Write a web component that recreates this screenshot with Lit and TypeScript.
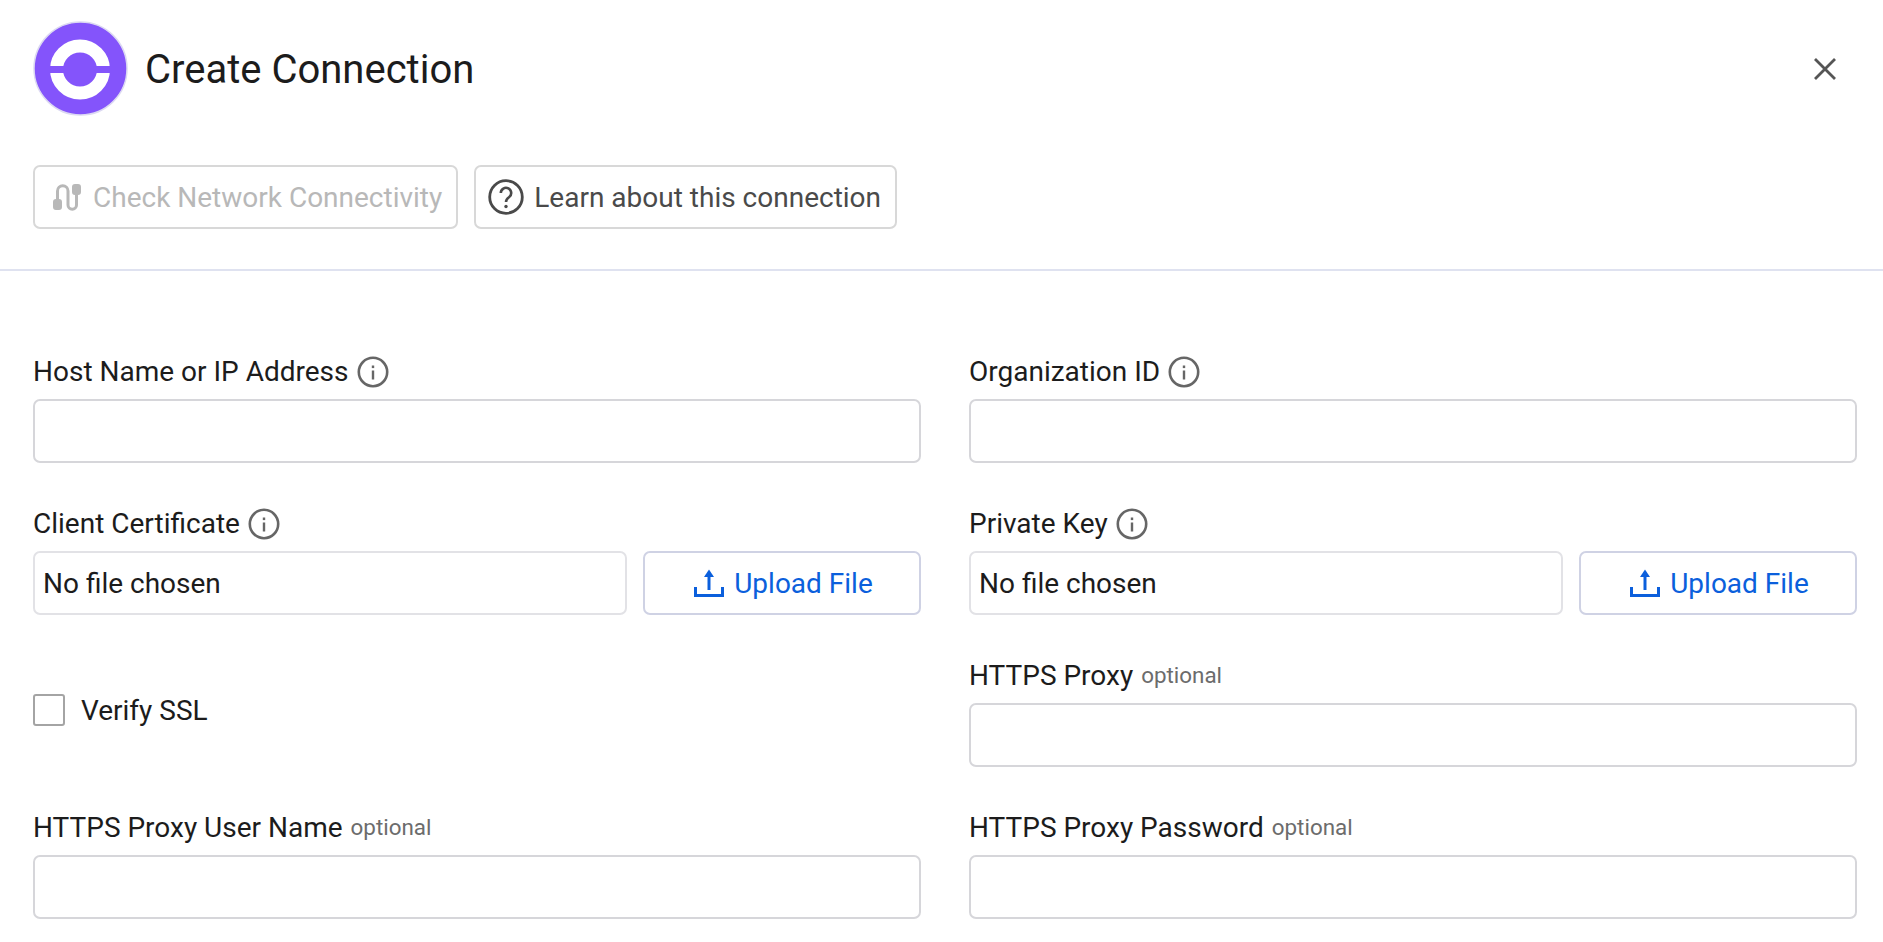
import { LitElement, html, css } from "lit";
import { customElement } from "lit/decorators.js";

const info = html`<svg class="info" viewBox="0 0 32 32" fill="none"><circle cx="16" cy="16" r="14.200" stroke="#666" stroke-width="2.600"/><rect x="14.800" y="14.500" width="2.400" height="9" fill="#666"/><rect x="14.800" y="9.500" width="2.400" height="2.600" fill="#666"/></svg>`;
const upload = html`<svg class="up" viewBox="0 0 30 28" fill="none"><path d="M1.500 18v8.500h27V18" stroke="#0b5fdc" stroke-width="3"/><path d="M15 21V5" stroke="#0b5fdc" stroke-width="3"/><path d="M10 8L15 0.500l5 7.500z" fill="#0b5fdc"/></svg>`;

@customElement("app-root")
export class AppRoot extends LitElement {
  static styles = css`
    :host { display: block; height: 942px; overflow: hidden; background: #fff; font-family: Roboto, "Liberation Sans", sans-serif; color: #1c1c1c; }
    .head { display: flex; align-items: center; height: 96px; padding: 21px 40px 0 33px; }
    .logo { width: 96px; height: 96px; flex: none; }
    h1 { flex: 1; margin: 2px 0 0 16px; font-size: 40px; font-weight: 400; line-height: 96px; }
    .close { width: 36px; height: 36px; }
    .actions { display: flex; gap: 16px; padding: 48px 33px 40px; border-bottom: 2px solid #dfe2f0; }
    .btn { display: flex; align-items: center; box-sizing: border-box; height: 64px; padding: 0 14px 0 12px; border: 2px solid #d8d8d8; border-radius: 7px; font-size: 28px; color: #4a4a4a; white-space: nowrap; gap: 10px; }
    .btn.off { color: #b8b8b8; padding: 0 14px 0 14px; gap: 8px; }
    .btn svg { width: 36px; height: 36px; flex: none; }
    .grid { display: grid; grid-template-columns: 888px 888px; column-gap: 48px; grid-auto-rows: 152px; padding: 77px 0 0 33px; }
    .field { display: flex; flex-direction: column; justify-content: flex-end; height: 115px; }
    .lab { display: flex; align-items: center; gap: 8px; height: 34px; margin-bottom: 10px; font-size: 28px; line-height: 34px; white-space: nowrap; }
    .opt { font-size: 22.400px; color: #6c6c6c; margin-top: -3px; }
    .info { width: 32px; height: 32px; flex: none; }
    .input { box-sizing: border-box; height: 64px; border: 2px solid #d6d6da; border-radius: 7px; }
    .file { display: flex; gap: 16px; }
    .name { flex: 1; box-sizing: border-box; height: 64px; border: 2px solid #e2e2e6; border-radius: 7px; padding: 0 8px; font-size: 28px; line-height: 62px; }
    .upl { width: 278px; box-sizing: border-box; height: 64px; flex: none; display: flex; align-items: center; justify-content: center; gap: 10px; padding-left: 3px; border: 2px solid #cfd2e4; border-radius: 7px; color: #0b5fdc; font-size: 28px; }
    .up { width: 30px; height: 28px; flex: none; }
    .check { display: flex; align-items: center; gap: 16px; font-size: 28px; height: 115px; box-sizing: border-box; }
    .check span:last-child { padding-top: 2px; }
    .box { box-sizing: border-box; width: 32px; height: 32px; border: 2px solid #a4a4a4; border-radius: 3px; flex: none; }
  `;

  private field(label: string, opt = "", hasInfo = false) {
    return html`<div class="field"><div class="lab"><span>${label}</span>${opt ? html`<span class="opt">${opt}</span>` : ""}${hasInfo ? info : ""}</div><div class="input"></div></div>`;
  }
  private file(label: string) {
    return html`<div class="field"><div class="lab"><span>${label}</span>${info}</div><div class="file"><div class="name">No file chosen</div><div class="upl">${upload}<span>Upload File</span></div></div></div>`;
  }

  render() {
    return html`
      <div class="head">
        <svg class="logo" viewBox="0 0 96 96">
          <circle cx="47.500" cy="47.500" r="46.500" fill="#8454fb" stroke="#dcd9f2" stroke-width="1.500"/>
          <circle cx="47" cy="48.500" r="23.500" fill="none" stroke="#fff" stroke-width="13"/>
          <rect x="15" y="45" width="65" height="7" fill="#8454fb"/>
        </svg>
        <h1>Create Connection</h1>
        <svg class="close" viewBox="0 0 36 36"><path d="M8 8L28 28M28 8L8 28" stroke="#555" stroke-width="2.800"/></svg>
      </div>
      <div class="actions">
        <div class="btn off">
          <svg viewBox="0 0 36 36" fill="none"><path d="M8.500 22V12a5.250 5.250 0 0 1 10.500 0V26a4.250 4.250 0 0 0 8.500 0V14" stroke="#b8b8b8" stroke-width="3"/><path d="M4 23q0-3 3-3h3q3 0 3 3v5q0 3-3 3H7q-3 0-3-3zM23 8q0-3 3-3h3q3 0 3 3v5q0 3-3 3h-3q-3 0-3-3z" fill="#b8b8b8"/></svg>
          <span>Check Network Connectivity</span>
        </div>
        <div class="btn">
          <svg viewBox="0 0 36 36" fill="none"><circle cx="18" cy="18" r="16.300" stroke="#4a4a4a" stroke-width="2.800"/><path d="M12.800 14a5.200 5.200 0 1 1 8.200 4.300c-2 1.400-3 2.300-3 4.700" stroke="#4a4a4a" stroke-width="2.600"/><circle cx="18" cy="27.500" r="1.700" fill="#4a4a4a"/></svg>
          <span>Learn about this connection</span>
        </div>
      </div>
      <div class="grid">
        ${this.field("Host Name or IP Address", "", true)}
        ${this.field("Organization ID", "", true)}
        ${this.file("Client Certificate")}
        ${this.file("Private Key")}
        <label class="check"><span class="box"></span><span>Verify SSL</span></label>
        ${this.field("HTTPS Proxy", "optional")}
        ${this.field("HTTPS Proxy User Name", "optional")}
        ${this.field("HTTPS Proxy Password", "optional")}
      </div>
    `;
  }
}
